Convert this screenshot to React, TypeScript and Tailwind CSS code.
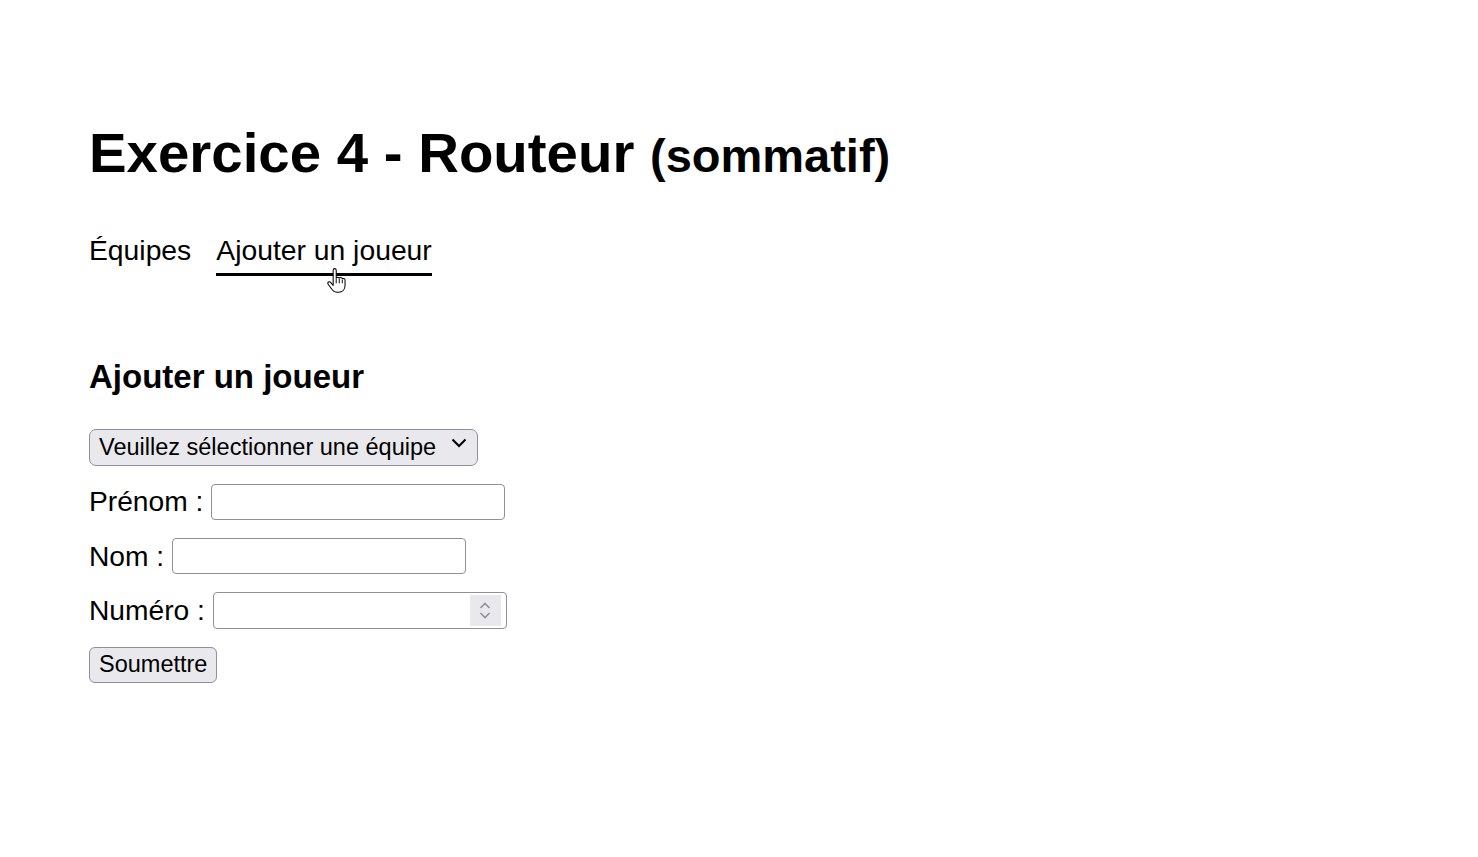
import { useState } from "react";

function HandCursor() {
  // pointer cursor hovering the active link
  return (
    <svg
      className="absolute left-[111px] top-[34px]"
      width="19"
      height="25"
      viewBox="0 0 20 26"
    >
      <path
        d="M6.5 2.2c0-1 .7-1.7 1.6-1.7s1.6.7 1.6 1.7v8.3c.3-.6.9-1 1.6-1 .8 0 1.4.5 1.6 1.2.3-.5.9-.8 1.5-.8.9 0 1.6.6 1.7 1.4.3-.3.7-.5 1.2-.5 1 0 1.7.8 1.7 1.8v5.6c0 4.2-2.8 7.1-6.9 7.1h-1.6c-2.2 0-3.8-.9-5-2.6L1.2 16.9c-.6-.8-.4-1.8.3-2.3.7-.5 1.7-.3 2.3.4l2.7 3.1V2.2z"
        fill="#fff"
        stroke="#000"
        strokeWidth="1.1"
        strokeLinejoin="round"
      />
      <path d="M9.7 11v5M12.9 11.4v4.6M16.1 12.2v3.8" stroke="#000" strokeWidth="1" />
    </svg>
  );
}

export default function App() {
  const [team, setTeam] = useState("");

  return (
    <div className="min-h-screen bg-white pl-[89px] pt-[121px] text-black font-['Liberation_Sans',Arial,sans-serif]">
      <h1 className="text-[56.4px] leading-[64px] font-bold">
        Exercice 4 - Routeur{" "}
        <small className="text-[47px] leading-none font-bold">(sommatif)</small>
      </h1>

      {/* NAV */}
      <nav className="mt-[49px] flex items-start text-[28.3px] leading-[32px]">
        <a className="mr-[25px] pb-[10px]">Équipes</a>
        <a className="relative border-b-[3px] border-black pb-[7px]">
          Ajouter un joueur
          <HandCursor />
        </a>
      </nav>

      <h2 className="mt-[82px] text-[33px] leading-[38px] font-bold">Ajouter un joueur</h2>

      {/* FORM */}
      <form className="mt-[28px] flex flex-col gap-[18.5px] text-[28.2px]">
        <div className="relative mb-[4px] h-[37px] w-[389px]">
          <select
            value={team}
            onChange={(e) => setTeam(e.target.value)}
            className="h-full w-full appearance-none rounded-[7px] border border-[#8f8f9d] bg-[#e9e9ed] pl-[9px] text-[23.5px] text-black outline-none"
          >
            <option value="">Veuillez sélectionner une équipe</option>
          </select>
          <svg
            className="pointer-events-none absolute right-[11px] top-[14px]"
            width="16"
            height="10"
            viewBox="0 0 16 10"
          >
            <path d="M1.5 1.5 8 8l6.5-6.5" fill="none" stroke="#000" strokeWidth="2" />
          </svg>
        </div>

        <div className="flex h-[36px] items-center">
          <label>Prénom :</label>
          <input className="ml-[8px] h-[36px] w-[294px] rounded-[4px] border border-[#8f8f9d] bg-white outline-none" />
        </div>

        <div className="flex h-[36px] items-center">
          <label>Nom :</label>
          <input className="ml-[8px] h-[36px] w-[294px] rounded-[4px] border border-[#8f8f9d] bg-white outline-none" />
        </div>

        <div className="flex h-[36px] items-center">
          <label>Numéro :</label>
          <div className="ml-[8px] flex h-[37px] w-[294px] items-stretch rounded-[4px] border border-[#8f8f9d] bg-white py-[2px] pr-[5px]">
            <input className="min-w-0 flex-1 bg-transparent outline-none" />
            <div className="flex w-[31px] flex-col items-center justify-center gap-[3px] bg-[#e9e9ed]">
              <svg width="12" height="7" viewBox="0 0 12 7">
                <path d="M1.5 6 6 1.5 10.5 6" fill="none" stroke="#8f8f9d" strokeWidth="1.6" />
              </svg>
              <svg width="12" height="7" viewBox="0 0 12 7">
                <path d="M1.5 1 6 5.5 10.5 1" fill="none" stroke="#8f8f9d" strokeWidth="1.6" />
              </svg>
            </div>
          </div>
        </div>

        <div className="flex">
          <button
            type="button"
            className="h-[36px] rounded-[6px] border border-[#8f8f9d] bg-[#e9e9ed] px-[9px] text-[23.5px] leading-none text-black"
          >
            Soumettre
          </button>
        </div>
      </form>
    </div>
  );
}
